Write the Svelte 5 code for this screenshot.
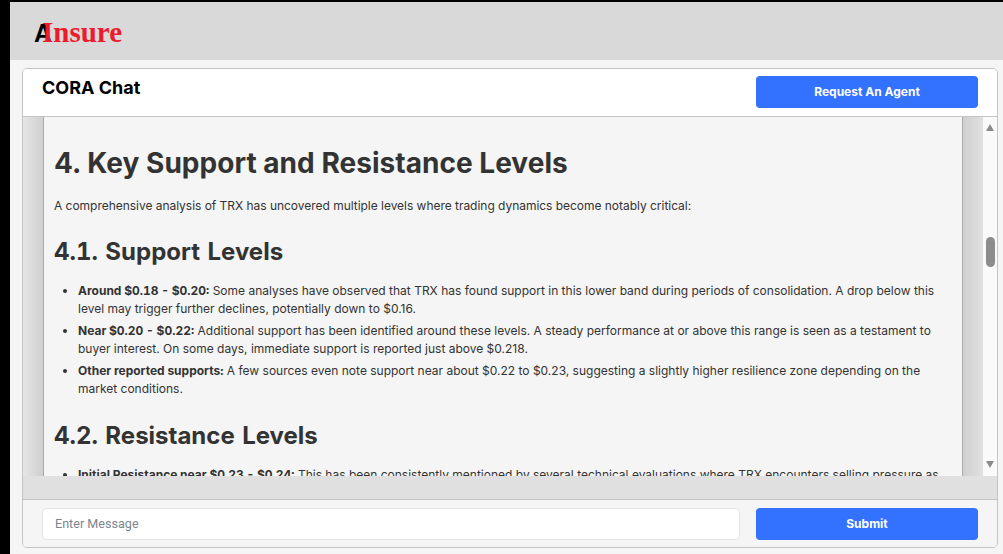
<script>
	const support = [
		{
			lead: "Around $0.18 - $0.20:",
			text: " Some analyses have observed that TRX has found support in this lower band during periods of consolidation. A drop below this level may trigger further declines, potentially down to $0.16."
		},
		{
			lead: "Near $0.20 - $0.22:",
			text: " Additional support has been identified around these levels. A steady performance at or above this range is seen as a testament to buyer interest. On some days, immediate support is reported just above $0.218."
		},
		{
			lead: "Other reported supports:",
			text: " A few sources even note support near about $0.22 to $0.23, suggesting a slightly higher resilience zone depending on the market conditions."
		}
	];

	const resistance = [
		{
			lead: "Initial Resistance near $0.23 - $0.24:",
			text: " This has been consistently mentioned by several technical evaluations where TRX encounters selling pressure as it approaches this range."
		}
	];
</script>

<style>
	:global(body) {
		margin: 0;
		background: #000;
		font-family: Inter, "Liberation Sans", sans-serif;
	}

	.page {
		height: 552px;
		margin: 2px 0 0 10px;
		background: #f5f5f5;
		display: flex;
		flex-direction: column;
		overflow: hidden;
	}

	.topbar {
		height: 58px;
		flex: none;
		background: #d9d9d9;
		display: flex;
		align-items: center;
		padding-left: 24px;
		box-sizing: border-box;
	}

	.logo {
		display: flex;
		align-items: baseline;
		margin-top: 2px;
		line-height: 1;
	}

	.logo-a {
		font-family: "Liberation Sans", sans-serif;
		font-weight: 700;
		font-size: 25px;
		color: #000;
		width: 8px;
	}

	.logo-rest {
		font-family: "Liberation Serif", serif;
		font-weight: 700;
		font-size: 29px;
		color: #ec1c2e;
	}

	.card {
		margin: 8px 5px 0 12px;
		height: 480px;
		flex: none;
		box-sizing: border-box;
		border: 1px solid #c4c4c4;
		border-radius: 5px;
		display: flex;
		flex-direction: column;
		overflow: hidden;
	}

	.card-head {
		height: 48px;
		flex: none;
		box-sizing: border-box;
		background: #fff;
		border-bottom: 1px solid #c4c4c4;
		display: flex;
		justify-content: space-between;
		padding: 7px 19px 0 19px;
	}

	.card-head h3 {
		margin: 0;
		font-size: 18px;
		font-weight: 700;
		line-height: 24px;
		color: #000;
	}

	.btn {
		width: 222px;
		height: 32px;
		border: 0;
		border-radius: 4px;
		background: #3371ff;
		color: #fff;
		font-family: inherit;
		font-size: 12px;
		font-weight: 700;
		padding: 0 0 2px;
	}

	.body {
		height: 359px;
		flex: none;
		display: flex;
		overflow: hidden;
	}

	.gutter-l,
	.gutter-r {
		width: 20px;
		flex: none;
	}

	.gutter-l {
		background: linear-gradient(to right, #e6e6e6, #cfcfcf);
	}

	.gutter-r {
		background: linear-gradient(to right, #cfcfcf, #e0e0e0);
	}

	.panel {
		flex: 1;
		min-width: 0;
		background: #f5f5f5;
		border-left: 1px solid #a9a9a9;
		border-right: 1px solid #a9a9a9;
		padding: 29px 18px 0 10px;
		color: #333;
		overflow: hidden;
	}

	.panel h1 {
		margin: 0 0 17px;
		font-size: 28px;
		line-height: 34px;
		font-weight: 700;
		letter-spacing: 0.03px;
	}

	.panel h2 {
		margin: 0 0 16px;
		font-size: 24px;
		line-height: 29px;
		font-weight: 700;
		font-variant-numeric: tabular-nums;
		word-spacing: 1px;
	}

	.panel p {
		margin: 0 0 22px;
		font-size: 12px;
		line-height: 18px;
		letter-spacing: -0.03px;
	}

	.panel ul {
		margin: 0 0 23px;
		padding-left: 24px;
		font-size: 12px;
		line-height: 18px;
	}

	.panel li {
		margin-bottom: 4px;
	}

	.panel li b {
		font-weight: 700;
		font-variant-numeric: tabular-nums;
		word-spacing: -0.5px;
	}

	.scroll {
		width: 14px;
		flex: none;
		background: #fafafa;
		display: flex;
		flex-direction: column;
		align-items: center;
	}

	.arrow {
		width: 0;
		height: 0;
		border-left: 4.5px solid transparent;
		border-right: 4.5px solid transparent;
	}

	.arrow.up {
		margin-top: 7px;
		border-bottom: 7px solid #8c8c8c;
	}

	.arrow.down {
		margin-top: auto;
		margin-bottom: 8px;
		border-top: 7px solid #8c8c8c;
	}

	.thumb {
		margin-top: 106px;
		width: 9px;
		height: 30px;
		border-radius: 5px;
		background: #8c8c8c;
	}

	.band {
		height: 24px;
		flex: none;
		box-sizing: border-box;
		background: #e0e0e0;
		border-bottom: 1px solid #c4c4c4;
	}

	.foot {
		flex: 1;
		display: flex;
		justify-content: space-between;
		padding: 8px 19px 0 19px;
		background: #f5f5f5;
	}

	.foot input {
		width: 698px;
		height: 32px;
		box-sizing: border-box;
		border: 1px solid #e4e4e4;
		border-radius: 4px;
		background: #fff;
		font-family: Roboto, sans-serif;
		font-size: 12.6px;
		padding: 0 12px 2px;
	}

	.foot input::placeholder {
		color: #7c8590;
		opacity: 1;
	}
</style>

<div class="page">
	<div class="topbar">
		<div class="logo">
			<span class="logo-a">A</span><span class="logo-rest">Insure</span>
		</div>
	</div>

	<div class="card">
		<div class="card-head">
			<h3>CORA Chat</h3>
			<button class="btn">Request An Agent</button>
		</div>

		<div class="body">
			<div class="gutter-l"></div>
			<div class="panel">
				<h1>4. Key Support and Resistance Levels</h1>
				<p>A comprehensive analysis of TRX has uncovered multiple levels where trading dynamics become notably critical:</p>
				<h2>4.1. Support Levels</h2>
				<ul>
					{#each support as item}
						<li><b>{item.lead}</b>{item.text}</li>
					{/each}
				</ul>
				<h2>4.2. Resistance Levels</h2>
				<ul>
					{#each resistance as item}
						<li><b>{item.lead}</b>{item.text}</li>
					{/each}
				</ul>
			</div>
			<div class="gutter-r"></div>
			<div class="scroll">
				<div class="arrow up"></div>
				<div class="thumb"></div>
				<div class="arrow down"></div>
			</div>
		</div>

		<div class="band"></div>

		<div class="foot">
			<input placeholder="Enter Message" />
			<button class="btn">Submit</button>
		</div>
	</div>
</div>
